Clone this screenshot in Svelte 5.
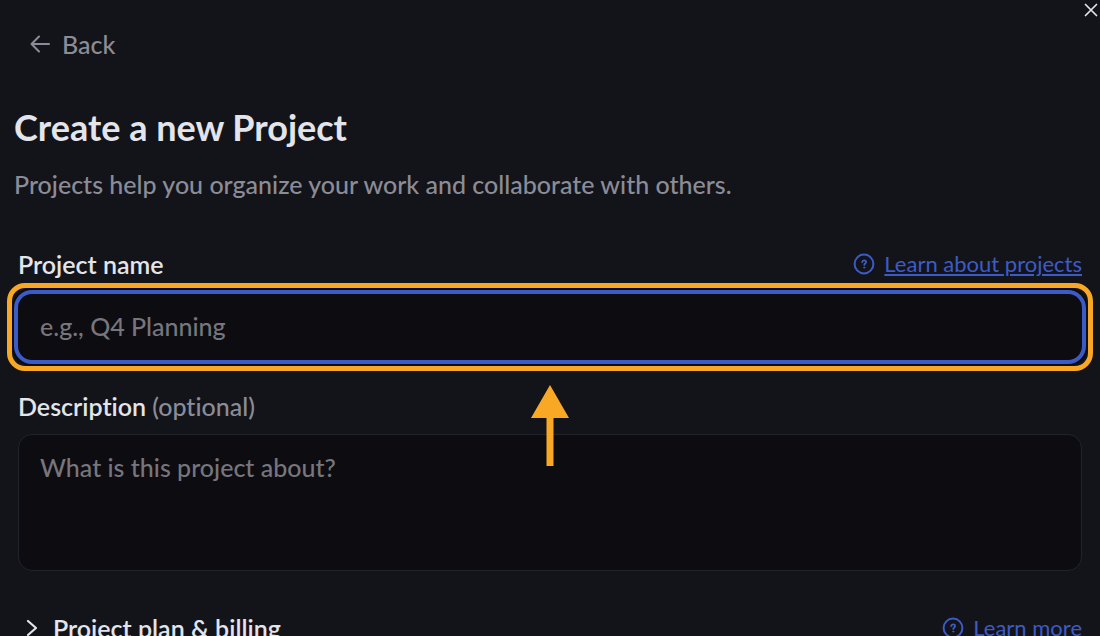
<script>
  let name = $state('');
  let description = $state('');
</script>

{#snippet help()}
  <svg class="help" viewBox="0 0 22 22" fill="none" stroke="currentColor" stroke-linecap="round" stroke-linejoin="round" aria-hidden="true">
    <circle cx="11" cy="11" r="9.4" stroke-width="2" />
    <path d="M9.2 9.1c.1-1.1.9-1.7 1.9-1.7 1.1 0 2 .7 2 1.7 0 1.3-1.8 1.4-1.8 2.8" stroke-width="1.8" />
    <circle cx="11.2" cy="14.6" r=".6" fill="currentColor" stroke-width="1" />
  </svg>
{/snippet}

<main>
  <button class="close" type="button" aria-label="Close">
    <svg viewBox="0 0 14 14" fill="none" stroke="currentColor" stroke-width="1.7" stroke-linecap="round" aria-hidden="true">
      <path d="M1.5 1.5l11 11M12.5 1.5l-11 11" />
    </svg>
  </button>

  <button class="back" type="button">
    <svg viewBox="0 0 20 20" fill="none" stroke="currentColor" stroke-width="2" stroke-linecap="round" stroke-linejoin="round" aria-hidden="true">
      <path d="M19 10H1.5M9 2.5L1.5 10 9 17.5" />
    </svg>
    Back
  </button>

  <h1>Create a new Project</h1>
  <p>Projects help you organize your work and collaborate with others.</p>

  <form>
    <div class="row">
      <label for="name">Project name</label>
      <a href="#projects">{@render help()}<span class="underlined">Learn about projects</span></a>
    </div>
    <div class="focus">
      <input id="name" type="text" placeholder="e.g., Q4 Planning" bind:value={name} />
      <svg class="pointer" viewBox="0 0 38 81" fill="currentColor" aria-hidden="true">
        <path d="M19 0L38 33H22.5V81H15.5V33H0z" />
      </svg>
    </div>

    <div class="row second">
      <label for="description">Description <span class="optional">(optional)</span></label>
    </div>
    <textarea id="description" placeholder="What is this project about?" bind:value={description}></textarea>

    <div class="row plan">
      <button class="toggle" type="button" aria-expanded="false">
        <svg viewBox="0 0 12 18" fill="none" stroke="currentColor" stroke-width="2.2" stroke-linecap="round" stroke-linejoin="round" aria-hidden="true">
          <path d="M2 2l8 7-8 7" />
        </svg>
        Project plan &amp; billing
      </button>
      <a href="#billing">{@render help()}<span class="underlined">Learn more</span></a>
    </div>
  </form>
</main>

<style>
  :global(body) {
    background: #13141a;
    overflow: hidden;
  }
  main {
    position: relative;
    padding: 27px 14px 0;
    color: #e4e5ea;
    font-family: Lato, sans-serif;
    font-size: 25px;
    font-weight: 500;
    font-variant-ligatures: none;
    line-height: 34px;
  }
  button,
  input,
  textarea {
    box-sizing: border-box;
    font: inherit;
    color: inherit;
    font-variant-ligatures: none;
  }
  button {
    display: flex;
    align-items: center;
    border: 0;
    padding: 0;
    background: none;
    cursor: pointer;
  }
  svg {
    flex: none;
    display: block;
  }
  .close {
    position: absolute;
    top: 3px;
    right: 2px;
  }
  .close svg {
    width: 14px;
    height: 14px;
  }
  .back {
    gap: 12px;
    margin-left: 16px;
    color: #8b8c96;
  }
  .back svg {
    width: 20px;
    height: 20px;
  }
  h1 {
    margin: 44px 0 0;
    font-size: 36px;
    line-height: 44px;
    font-weight: 700;
  }
  p {
    margin: 18px 0 0;
    color: #8b8c96;
  }
  form {
    margin: 46px 4px 0;
  }
  .row {
    display: flex;
    justify-content: space-between;
    align-items: center;
  }
  label,
  .toggle {
    font-weight: 600;
  }
  .optional {
    font-weight: 500;
    color: #8b8c96;
  }
  a {
    display: flex;
    align-items: center;
    gap: 9px;
    color: #3d5bc7;
    font-size: 22px;
    font-weight: 400;
    text-decoration: none;
  }
  .underlined {
    text-decoration: underline;
    text-decoration-thickness: 2px;
    text-underline-offset: 2px;
  }
  .help {
    width: 22px;
    height: 22px;
  }
  .focus {
    position: relative;
    margin-top: 13px;
  }
  .focus::after {
    content: '';
    position: absolute;
    inset: -11px;
    border: 5px solid #f9a825;
    border-radius: 18px;
    pointer-events: none;
  }
  input,
  textarea {
    display: block;
    width: 100%;
    border: 0;
    border-radius: 14px;
    background: #0d0c11;
    outline: 0;
  }
  input {
    height: 66px;
    padding: 0 22px 2px;
    box-shadow: 0 0 0 4px #3d5bc7, 0 0 0 6px #0d0c11;
  }
  textarea {
    height: 137px;
    padding: 15px 21px;
    border: 1px solid #222329;
    resize: none;
  }
  ::placeholder {
    color: #76767c;
    opacity: 1;
  }
  .pointer {
    position: absolute;
    top: 91px;
    left: calc(50% - 19px);
    width: 38px;
    height: 81px;
    color: #f9a825;
    pointer-events: none;
  }
  .second {
    margin: 29px 0 11px;
  }
  .plan {
    margin-top: 40px;
  }
  .toggle {
    gap: 15px;
    margin-left: 8px;
  }
  .toggle svg {
    width: 12px;
    height: 18px;
  }
</style>
